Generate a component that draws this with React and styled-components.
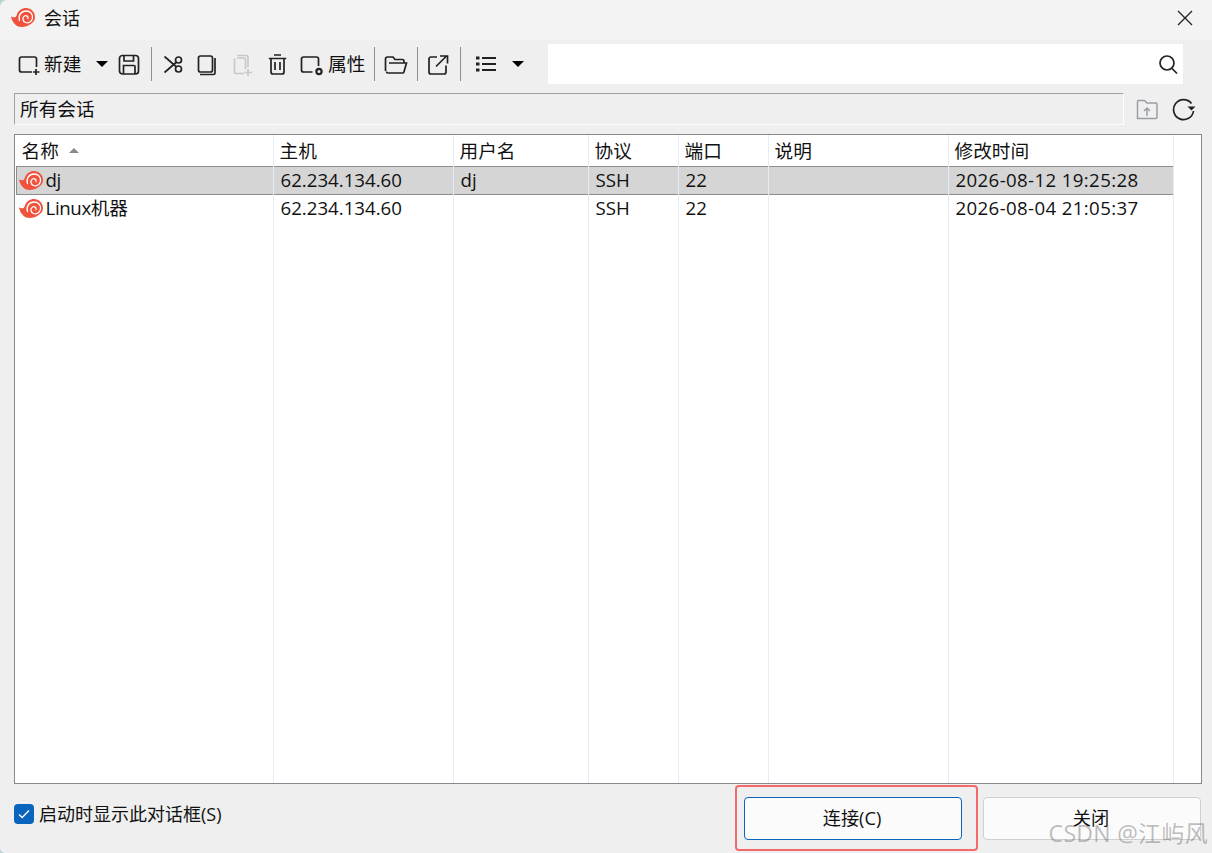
import React from "react";
import styled, { createGlobalStyle } from "styled-components";

const Global = createGlobalStyle`
  html, body { margin: 0; padding: 0; background: #b7d3d6; }
  #root { width: 1212px; height: 853px; overflow: hidden; }
  * { box-sizing: border-box; }
`;

const FONT = `"Open Sans", "Noto Sans CJK SC", sans-serif`;
const TEXT = "18.67px";

const Window = styled.div`
  position: relative;
  width: 1212px;
  height: 853px;
  overflow: hidden;
  border-radius: 8px 0 0 5px;
  background: #efefef;
  font-family: ${FONT};
  font-size: ${TEXT};
  color: #111;
  display: flex;
  flex-direction: column;
`;

const TitleBar = styled.header`
  height: 40px;
  flex: none;
  background: #f3f3f3;
  display: flex;
  align-items: center;
  padding: 0 19px 5px 11px;
`;
const TitleText = styled.span`
  margin-left: 9px;
  font-size: 18px;
  line-height: 24px;
  flex: 1;
`;

const Toolbar = styled.div`
  height: 48px;
  flex: none;
  display: flex;
  align-items: center;
  padding: 0 29px 0 18px;
`;
const Tool = styled.div`
  width: ${(p) => p.$w}px;
  margin-left: ${(p) => p.$ml || 0}px;
  flex: none;
  height: 24px;
  display: flex;
  align-items: center;
  white-space: nowrap;
  line-height: 24px;
`;
const ToolLabel = styled.span`
  margin-left: 4px;
  font-size: ${TEXT};
`;
const Sep = styled.div`
  width: 1px;
  height: 34px;
  flex: none;
  background: #8f8f8f;
  margin-left: ${(p) => p.$ml}px;
`;
const Caret = styled.div`
  width: 0;
  height: 0;
  flex: none;
  margin-left: ${(p) => p.$ml}px;
  border-left: 6px solid transparent;
  border-right: 6px solid transparent;
  border-top: 6px solid #000;
`;
const Search = styled.div`
  margin-left: 24px;
  flex: 1;
  height: 40px;
  background: #fff;
  display: flex;
  align-items: center;
  justify-content: flex-end;
  padding-right: 4px;
`;

const PathRow = styled.div`
  height: 32px;
  flex: none;
  margin: 5px 0 0 14px;
  display: flex;
  align-items: center;
`;
const PathBox = styled.div`
  width: 1110px;
  height: 32px;
  border: 1px solid;
  border-color: #a0a0a0 #fff #fff #a0a0a0;
  padding-left: 5px;
  line-height: 30px;
`;
const PathIcon = styled.div`
  margin-left: ${(p) => p.$ml}px;
  flex: none;
  display: flex;
`;

const List = styled.div`
  position: relative;
  margin: 9px 10px 0 14px;
  height: 650px;
  flex: none;
  background: #fff;
  border: 1px solid #868a8e;
`;
const colTemplate = "258px 180px 135px 90px 90px 180px 225px";
const HeaderRow = styled.div`
  display: grid;
  grid-template-columns: ${colTemplate};
  height: 31px;
  align-items: center;
`;
const HeaderCell = styled.div`
  padding-left: 6.500px;
  display: flex;
  align-items: center;
  line-height: 31px;
`;
const SortArrow = styled.span`
  width: 0;
  height: 0;
  margin-left: 10px;
  border-left: 5px solid transparent;
  border-right: 5px solid transparent;
  border-bottom: 5px solid #8a8a8a;
`;
const Row = styled.div`
  display: grid;
  grid-template-columns: ${colTemplate};
  height: ${(p) => (p.$selected ? 29 : 28)}px;
  margin: ${(p) => (p.$selected ? "0 0 -1px 1px" : "0 0 0 1px")};
  width: 1158px;
  align-items: center;
  background: ${(p) => (p.$selected ? "#d5d5d5" : "transparent")};
  border: 1px solid ${(p) => (p.$selected ? "#8c8c8c" : "transparent")};
`;
const Cell = styled.div`
  padding: 0 0 2px 5.500px;
  line-height: 25px;
  white-space: nowrap;
  display: flex;
  align-items: center;
`;
const TimeCell = styled(Cell)`
  letter-spacing: 0.37px;
`;
const NameCell = styled(Cell)`
  padding-left: 3px;
  margin-left: -1px;
  gap: 2.500px;
  letter-spacing: -0.35px;
`;
const SnailSlot = styled.span`
  display: flex;
  position: relative;
  top: 1px;
`;
const Guides = styled.div`
  position: absolute;
  inset: 0;
  display: grid;
  grid-template-columns: ${colTemplate};
  pointer-events: none;
`;
const Guide = styled.div`
  border-right: 1px solid #e4edf7;
  margin-right: -1px;
`;

const Footer = styled.footer`
  flex: 1;
  display: flex;
  align-items: flex-start;
  padding: 1px 11px 0 14px;
`;
const CheckWrap = styled.label`
  display: flex;
  align-items: center;
  margin-top: 18px;
  height: 22px;
  font-size: 18px;
  line-height: 22px;
  flex: 1;
`;
const CheckBox = styled.span`
  width: 20px;
  height: 20px;
  border-radius: 4px;
  background: #0a63bd;
  margin-right: 5px;
  display: flex;
  align-items: center;
  justify-content: center;
`;
const Highlight = styled.div`
  width: 243px;
  height: 66px;
  border: 2px solid #f26a6a;
  border-radius: 4px;
  padding: 10px 0 0 7px;
`;
const Button = styled.button`
  width: 218px;
  height: 43px;
  font: inherit;
  font-size: 18.200px;
  line-height: 24px;
  color: #111;
  padding: 0 2px 2px 0;
  background: #fbfbfb;
  border-radius: 4px;
  border: 1px solid ${(p) => (p.$primary ? "#0a63bd" : "#cfcfcf")};
`;
const CloseWrap = styled.div`
  margin: 12px 0 0 5px;
`;
const Watermark = styled.div`
  position: absolute;
  right: 4px;
  bottom: 6px;
  font-size: 23px;
  line-height: 28px;
  color: rgba(110, 110, 110, 0.45);
  letter-spacing: 0.3px;
  pointer-events: none;
  white-space: nowrap;
`;

const Snail = ({ w = 24, h = 19 }) => (
  <svg width={w} height={h} viewBox="0 0 24 19" style={{ flex: "none" }}>
    <path d="M0 8.500C3 10 5 9.500 6 6.500 7.200 2.500 11 0 15 0c5 0 9 4 9 9 0 3-1.500 5.500-4 6.800C17 18 14 19 10.500 19 5 19 1 14 0 8.500Z" fill="#f1523c" />
    <path d="M8.500 12.500C7 7.500 10 3 15 3c4.500 0 7 3.500 6.500 7-.5 3.500-4 5.500-7 4.500-3-1-3.500-5-1-6.500 2-1 4 .5 3.500 2.500" fill="none" stroke="#fff" strokeWidth="1.300" strokeLinecap="round" />
  </svg>
);

const Ic = ({ w = 24, h = 24, color = "#222", sw = 1.700, children }) => (
  <svg width={w} height={h} viewBox={`0 0 ${w} ${h}`} fill="none" stroke={color} strokeWidth={sw} style={{ flex: "none" }}>
    {children}
  </svg>
);

const NewIcon = () => (
  <Ic w={22} h={24}>
    <path d="M14 20H3.500A2 2 0 0 1 1.500 18V7a2 2 0 0 1 2-2h13a2 2 0 0 1 2 2V15" />
    <path d="M18 17v6M15 20h6.500" />
  </Ic>
);
const SaveIcon = () => (
  <Ic w={22} h={24}>
    <rect x="1.500" y="3.500" width="19" height="18.500" rx="3" />
    <path d="M6 3.500v5.500h9.500V3.500M5.500 22v-8.500h10.500a1 1 0 0 1 1 1V22" />
  </Ic>
);
const CutIcon = () => (
  <Ic w={20} h={24}>
    <circle cx="15.500" cy="8" r="3" />
    <circle cx="15.500" cy="17" r="3" />
    <path d="M1.500 4.500l11.500 10M1.500 20.500L13 10.500" />
  </Ic>
);
const CopyIcon = () => (
  <Ic w={20} h={24}>
    <rect x="1.500" y="4" width="14" height="16" rx="2" />
    <path d="M18 6v15a1.500 1.500 0 0 1-1.500 1.500H3" />
  </Ic>
);
const PasteIcon = () => (
  <Ic w={20} h={24} color="#c8c8c8">
    <path d="M4 3.500h9a2 2 0 0 1 2 2V15M1.500 6.500v13a2 2 0 0 0 2 2H11" />
    <path d="M15 17v7M11.500 20.500h7.500" />
    <path d="M4 6h7.500a1 1 0 0 1 1 1v10" />
  </Ic>
);
const TrashIcon = () => (
  <Ic w={19} h={24}>
    <path d="M.800 6.500h17.400M6 3h7M3 6.500v13.500a2 2 0 0 0 2 2h9a2 2 0 0 0 2-2V6.500M7 10v8M12 10v8" />
  </Ic>
);
const PropIcon = () => (
  <Ic w={24} h={24}>
    <path d="M12.500 20H3.500a2 2 0 0 1-2-2V7a2 2 0 0 1 2-2h13a2 2 0 0 1 2 2V14" />
    <circle cx="19" cy="19.500" r="2.600" strokeWidth="2.200" />
  </Ic>
);
const FolderIcon = () => (
  <Ic w={24} h={24}>
    <path d="M2.500 19.500a1.500 1.500 0 0 0 1.500 1.500h14.500a1.500 1.500 0 0 0 1.500-1.200L22.500 11H5" />
    <path d="M1.500 19V7a2 2 0 0 1 2-2h5.500l2 2.500h7.500a1.500 1.500 0 0 1 1.500 1.500v2" />
  </Ic>
);
const ExportIcon = () => (
  <Ic w={22} h={24}>
    <path d="M9 5H3a2 2 0 0 0-2 2v13a2 2 0 0 0 2 2h13a2 2 0 0 0 2-2v-6.500" />
    <path d="M8 14.500L18.500 4M12 4h7.500v7.500" />
  </Ic>
);
const ListIcon = () => (
  <Ic w={22} h={24} sw={1.800}>
    <path d="M7 6h14M7 12h14M7 18h14" />
    <path d="M1 6h3.500M1 12h3.500M1 18h3.500" strokeWidth="3.200" />
  </Ic>
);
const SearchIcon = () => (
  <Ic w={22} h={24}>
    <circle cx="10" cy="11" r="7" />
    <path d="M15 16.500l5 5" />
  </Ic>
);
const UpFolderIcon = () => (
  <Ic w={24} h={24} color="#9a9ea4" sw={1.500}>
    <path d="M2.500 21.500V4.500a1 1 0 0 1 1-1h6l2.500 2.500h9a1 1 0 0 1 1 1v13.500a1 1 0 0 1-1 1z" />
    <path d="M12 19v-7.500M9 14l3-3 3 3" />
  </Ic>
);
const RefreshIcon = () => (
  <Ic w={24} h={24} sw={1.700}>
    <path d="M19.500 6.500A10 10 0 1 0 21.500 14" />
    <path d="M15.500 9.500h8L19.500 13.500z" fill="#222" stroke="none" />
  </Ic>
);
const CloseIcon = () => (
  <Ic w={16} h={16} sw={1.300}>
    <path d="M1 1l14 14M15 1L1 15" />
  </Ic>
);

const rows = [
  { name: "dj", host: "62.234.134.60", user: "dj", proto: "SSH", port: "22", time: "2026-08-12 19:25:28", selected: true },
  { name: "Linux机器", host: "62.234.134.60", user: "", proto: "SSH", port: "22", time: "2026-08-04 21:05:37" },
];
const headers = ["名称", "主机", "用户名", "协议", "端口", "说明", "修改时间"];

export default function App() {
  return (
    <Window>
      <Global />
      <TitleBar>
        <Snail />
        <TitleText>会话</TitleText>
        <CloseIcon />
      </TitleBar>
      <Toolbar>
        <Tool $w={70}><NewIcon /><ToolLabel>新建</ToolLabel></Tool>
        <Caret $ml={8} />
        <Tool $w={22} $ml={10}><SaveIcon /></Tool>
        <Sep $ml={11} />
        <Tool $w={20} $ml={11}><CutIcon /></Tool>
        <Tool $w={20} $ml={14}><CopyIcon /></Tool>
        <Tool $w={20} $ml={16}><PasteIcon /></Tool>
        <Tool $w={19} $ml={15}><TrashIcon /></Tool>
        <Tool $w={65} $ml={13}><PropIcon /><ToolLabel>属性</ToolLabel></Tool>
        <Sep $ml={9} />
        <Tool $w={24} $ml={9}><FolderIcon /></Tool>
        <Sep $ml={9} />
        <Tool $w={22} $ml={10}><ExportIcon /></Tool>
        <Sep $ml={10} />
        <Tool $w={22} $ml={14}><ListIcon /></Tool>
        <Caret $ml={15} />
        <Search><SearchIcon /></Search>
      </Toolbar>
      <PathRow>
        <PathBox>所有会话</PathBox>
        <PathIcon $ml={11}><UpFolderIcon /></PathIcon>
        <PathIcon $ml={13}><RefreshIcon /></PathIcon>
      </PathRow>
      <List>
        <HeaderRow>
          {headers.map((h, i) => (
            <HeaderCell key={h}>{h}{i === 0 && <SortArrow />}</HeaderCell>
          ))}
        </HeaderRow>
        {rows.map((r) => (
          <Row key={r.name} $selected={r.selected}>
            <NameCell><SnailSlot><Snail /></SnailSlot>{r.name}</NameCell>
            <Cell>{r.host}</Cell>
            <Cell>{r.user}</Cell>
            <Cell>{r.proto}</Cell>
            <Cell>{r.port}</Cell>
            <Cell />
            <TimeCell>{r.time}</TimeCell>
          </Row>
        ))}
        <Guides>
          {headers.map((h) => <Guide key={h} />)}
        </Guides>
      </List>
      <Footer>
        <CheckWrap>
          <CheckBox>
            <svg width="12" height="10" viewBox="0 0 12 10" fill="none" stroke="#fff" strokeWidth="1.300"><path d="M1 5.500l3.200 3L11 1.500" /></svg>
          </CheckBox>
          启动时显示此对话框(S)
        </CheckWrap>
        <Highlight><Button $primary>连接(C)</Button></Highlight>
        <CloseWrap><Button>关闭</Button></CloseWrap>
      </Footer>
      <Watermark>CSDN @江屿风</Watermark>
    </Window>
  );
}
